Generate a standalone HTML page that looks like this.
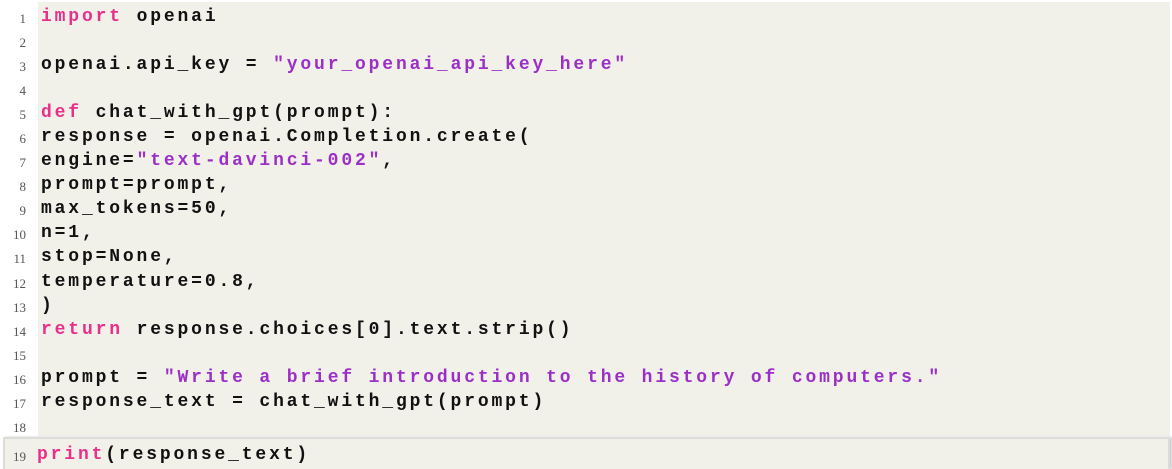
<!DOCTYPE html>
<html><head><meta charset="utf-8"><style>
body{margin:0;width:1172px;height:459px;background:#fff;position:relative;overflow:hidden}
.bg{position:absolute;left:38px;top:2px;width:1132px;height:434px;background:#f1f0e9}
.b19{position:absolute;left:3px;top:437px;width:1163px;height:30px;background:#f1f0e9;border:2px solid #dcdcd8;border-bottom:none;box-shadow:2px 0 2px #ccc}
.code{position:absolute;left:0;top:5px;width:1172px;font-family:"Liberation Mono",monospace;font-weight:bold;font-size:18px;letter-spacing:2.85px;line-height:24.06px;color:#111}
.l{position:relative;height:24.06px;width:1172px}
.n{position:absolute;right:1146px;font-family:"Liberation Serif",serif;font-weight:normal;font-size:13px;letter-spacing:0;color:#555;top:2px}
.t{position:absolute;left:41px;white-space:pre}
.k{color:#e8308a}.s{color:#9b2fc6}
</style></head><body>
<div class="bg"></div><div class="b19"></div>
<div class="code">
<div class="l"><span class="n">1</span><span class="t"><span class="k">import</span> openai</span></div>
<div class="l"><span class="n">2</span></div>
<div class="l"><span class="n">3</span><span class="t">openai.api_key = <span class="s">"your_openai_api_key_here"</span></span></div>
<div class="l"><span class="n">4</span></div>
<div class="l"><span class="n">5</span><span class="t"><span class="k">def</span> chat_with_gpt(prompt):</span></div>
<div class="l"><span class="n">6</span><span class="t">response = openai.Completion.create(</span></div>
<div class="l"><span class="n">7</span><span class="t">engine=<span class="s">"text-davinci-002"</span>,</span></div>
<div class="l"><span class="n">8</span><span class="t">prompt=prompt,</span></div>
<div class="l"><span class="n">9</span><span class="t">max_tokens=50,</span></div>
<div class="l"><span class="n">10</span><span class="t">n=1,</span></div>
<div class="l"><span class="n">11</span><span class="t">stop=None,</span></div>
<div class="l"><span class="n">12</span><span class="t">temperature=0.8,</span></div>
<div class="l"><span class="n">13</span><span class="t">)</span></div>
<div class="l"><span class="n">14</span><span class="t"><span class="k">return</span> response.choices[0].text.strip()</span></div>
<div class="l"><span class="n">15</span></div>
<div class="l"><span class="n">16</span><span class="t">prompt = <span class="s">"Write a brief introduction to the history of computers."</span></span></div>
<div class="l"><span class="n">17</span><span class="t">response_text = chat_with_gpt(prompt)</span></div>
<div class="l"><span class="n">18</span></div>
<div class="l" style="top:5px"><span class="n">19</span><span class="t" style="left:37px"><span class="k">print</span>(response_text)</span></div>
</div>
</body></html>
